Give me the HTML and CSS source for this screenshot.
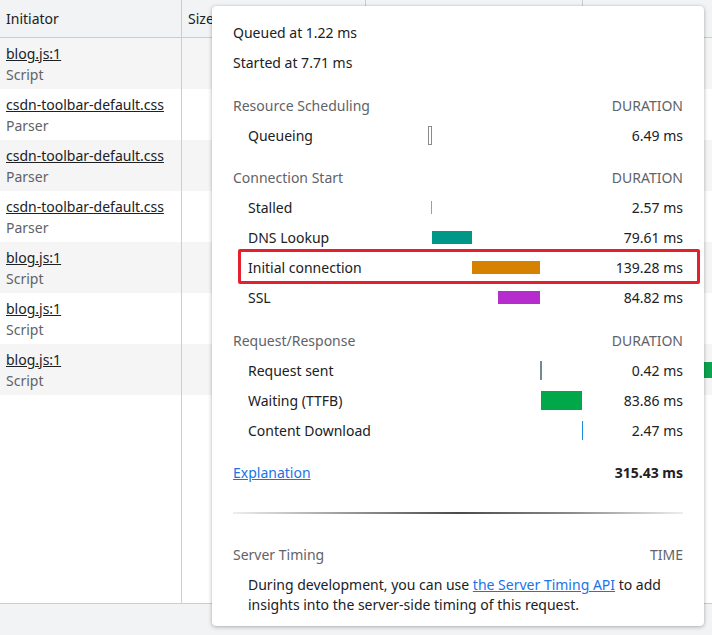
FILE: index.html
```html
<!DOCTYPE html>
<html lang="en">
<head>
<meta charset="utf-8">
<title>Network timing</title>
<link rel="stylesheet" href="styles.css">
</head>
<body>
<div class="app">
  <div class="table">
    <div class="row head">
      <div class="cell hcell">Initiator</div>
      <div class="cell hcell">Size</div>
      <div class="cell hcell"></div>
      <div class="cell hcell"></div>
    </div>
    <div class="row data alt">
      <div class="cell"><a class="ini">blog.js:1</a><span class="sub">Script</span></div>
      <div class="cell"></div><div class="cell"></div><div class="cell"></div>
    </div>
    <div class="row data">
      <div class="cell"><a class="ini">csdn-toolbar-default.css</a><span class="sub">Parser</span></div>
      <div class="cell"></div><div class="cell"></div><div class="cell"></div>
    </div>
    <div class="row data alt">
      <div class="cell"><a class="ini">csdn-toolbar-default.css</a><span class="sub">Parser</span></div>
      <div class="cell"></div><div class="cell"></div><div class="cell"></div>
    </div>
    <div class="row data">
      <div class="cell"><a class="ini">csdn-toolbar-default.css</a><span class="sub">Parser</span></div>
      <div class="cell"></div><div class="cell"></div><div class="cell"></div>
    </div>
    <div class="row data alt">
      <div class="cell"><a class="ini">blog.js:1</a><span class="sub">Script</span></div>
      <div class="cell"></div><div class="cell"></div><div class="cell"></div>
    </div>
    <div class="row data">
      <div class="cell"><a class="ini">blog.js:1</a><span class="sub">Script</span></div>
      <div class="cell"></div><div class="cell"></div><div class="cell"></div>
    </div>
    <div class="row data alt">
      <div class="cell"><a class="ini">blog.js:1</a><span class="sub">Script</span></div>
      <div class="cell"></div><div class="cell"></div>
      <div class="cell wf"><span class="wfbar" style="margin-left:100px;width:40px"></span></div>
    </div>
    <div class="row filler">
      <div class="cell"></div><div class="cell"></div><div class="cell"></div><div class="cell"></div>
    </div>
  </div>
  <div class="statusbar"></div>

  <div class="popup">
    <div class="line">Queued at 1.22 ms</div>
    <div class="line">Started at 7.71 ms</div>

    <div class="section s-odd">
      <div class="line shead"><span>Resource Scheduling</span><span>DURATION</span></div>
      <div class="trow"><span class="lbl">Queueing</span><span class="track"><span class="bar tall queue" style="margin-left:0;width:4px"></span></span><span class="dur">6.49 ms</span></div>
    </div>

    <div class="section s-even">
      <div class="line shead"><span>Connection Start</span><span>DURATION</span></div>
      <div class="trow"><span class="lbl">Stalled</span><span class="track"><span class="bar stalled" style="margin-left:3px;width:1px"></span></span><span class="dur">2.57 ms</span></div>
      <div class="trow"><span class="lbl">DNS Lookup</span><span class="track"><span class="bar dns" style="margin-left:4px;width:40px"></span></span><span class="dur">79.61 ms</span></div>
      <div class="trow hl"><span class="lbl">Initial connection</span><span class="track"><span class="bar conn" style="margin-left:44px;width:68px"></span></span><span class="dur">139.28 ms</span><span class="mark"></span></div>
      <div class="trow"><span class="lbl">SSL</span><span class="track"><span class="bar ssl" style="margin-left:70px;width:42px"></span></span><span class="dur">84.82 ms</span></div>
    </div>

    <div class="section s-odd">
      <div class="line shead"><span>Request/Response</span><span>DURATION</span></div>
      <div class="trow"><span class="lbl">Request sent</span><span class="track"><span class="bar tall sent" style="margin-left:112px;width:2px"></span></span><span class="dur">0.42 ms</span></div>
      <div class="trow"><span class="lbl">Waiting (TTFB)</span><span class="track"><span class="bar tall wait" style="margin-left:113px;width:41px"></span></span><span class="dur">83.86 ms</span></div>
      <div class="trow"><span class="lbl">Content Download</span><span class="track"><span class="bar tall dl" style="margin-left:154px;width:1px"></span></span><span class="dur">2.47 ms</span></div>
    </div>

    <div class="section s-even">
      <div class="line total"><a class="link">Explanation</a><b>315.43 ms</b></div>
    </div>

    <div class="divider"></div>

    <div class="line shead"><span>Server Timing</span><span>TIME</span></div>
    <p class="note">During development, you can use <a class="link">the Server Timing API</a> to add insights into the server-side timing of this request.</p>
  </div>
</div>
</body>
</html>
```

FILE: styles.css
```css
* { box-sizing: border-box; }
html, body { margin: 0; padding: 0; }
body {
  font-family: "Noto Sans", "Open Sans", sans-serif;
  font-size: 14px;
  color: #202124;
  background: #fff;
}
.app {
  position: relative;
  width: 712px;
  height: 635px;
  display: flex;
  flex-direction: column;
  overflow: hidden;
}
.table {
  flex: 1;
  display: flex;
  flex-direction: column;
  border-bottom: 1px solid #cacdd1;
}
.row {
  display: grid;
  grid-template-columns: 182px 184px 217px 1fr;
}
.cell { border-right: 1px solid #cacdd1; padding-left: 6px; min-width: 0; }
.cell:last-child { border-right: 0; }
.head { height: 38px; background: #f1f3f4; border-bottom: 1px solid #cacdd1; }
.hcell { display: flex; align-items: center; }
.data { height: 51px; }
.data .cell { padding-top: 5px; display: flex; flex-direction: column; line-height: 21px; }
.alt { background: #f5f5f5; }
.ini { color: #202124; text-decoration: underline; white-space: nowrap; }
.sub { color: #5f6368; }
.filler { flex: 1; }
.data .wf { padding-top: 0; justify-content: center; padding-left: 0; }
.wfbar { display: block; height: 16px; background: #0aa34f; }
.statusbar { height: 31px; background: #f1f3f4; }

.popup {
  position: absolute;
  left: 212px;
  top: 6px;
  width: 492px;
  height: 620px;
  background: #fff;
  border-radius: 4px;
  box-shadow: 0 1px 4px rgba(0,0,0,0.28), 0 0 1px rgba(0,0,0,0.2);
  padding: 11px 21px 12px;
}
.line {
  height: 30px;
  display: flex;
  align-items: center;
  justify-content: space-between;
}
.s-odd { margin-top: 13px; }
.s-even { margin-top: 12px; }
.shead { color: #5f6368; }
.trow {
  position: relative;
  height: 30px;
  display: grid;
  grid-template-columns: 195px 154px 101px;
  align-items: center;
}
.lbl { padding-left: 15px; }
.dur { text-align: right; }
.track { display: flex; align-items: center; height: 30px; }
.bar { display: block; height: 13px; flex: none; }
.bar.tall { height: 19px; }
.queue { border: 1px solid #8a8a8a; background: #fff; }
.stalled { background: #9aa0a6; }
.dns { background: #009688; }
.conn { background: #d68100; }
.ssl { background: #b52dcc; }
.sent { background: #6d8c93; }
.wait { background: #00a84a; }
.dl { background: #1a8fe0; }
.mark {
  position: absolute;
  left: 5px;
  right: -17px;
  top: -3px;
  bottom: -2px;
  border: 3px solid #e5202e;
  border-radius: 2px;
}
.total b { font-weight: 700; }
.link { color: #1a73e8; text-decoration: underline; cursor: pointer; }
.divider {
  margin: 25px 0 25px;
  height: 2px;
  background: linear-gradient(to right, #eeeeee 0%, #8a8a8a 30%, #4a4a4a 50%, #8a8a8a 75%, #eeeeee 100%);
}
.note {
  margin: 6px 0 0;
  padding-left: 15px;
  line-height: 20px;
}
```
